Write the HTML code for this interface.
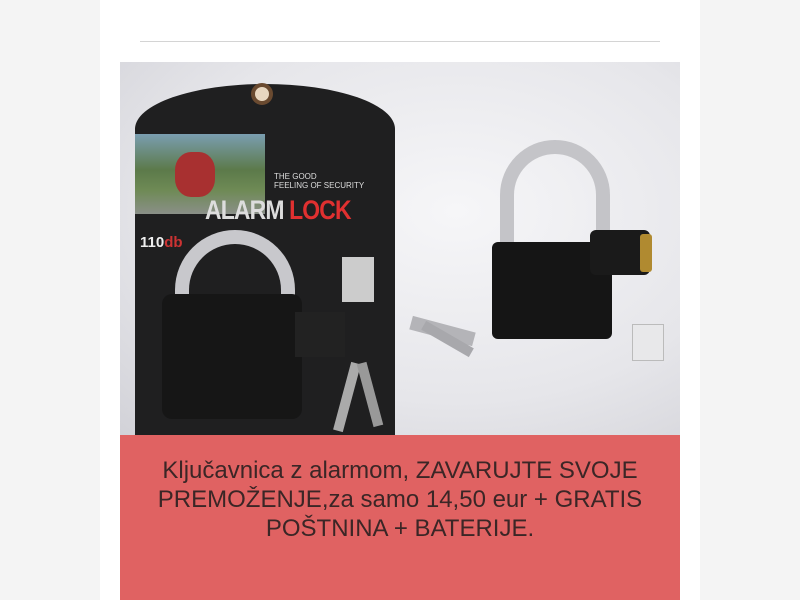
<!DOCTYPE html>
<html><head><meta charset="utf-8"><style>
body{margin:0;background:#f4f4f4;font-family:"Liberation Sans",sans-serif}
.col{position:absolute;left:100px;top:0;width:600px;height:600px;background:#fff}
.hr{position:absolute;left:140px;top:41px;width:520px;height:1px;background:#d4d4d4}
.img{position:absolute;left:120px;top:62px;width:560px;height:373px;overflow:hidden;background:radial-gradient(ellipse at 60% 40%,#f6f6f8 0%,#e6e6ea 60%,#d2d2d8 100%)}
.a{position:absolute}
.red{position:absolute;left:120px;top:435px;width:560px;height:165px;background:#e06262;color:#3b2626;font-size:24px;line-height:29px;text-align:center;padding-top:21px;box-sizing:border-box}
</style></head><body>
<div class="col"></div><div class="hr"></div>
<div class="img">
 <div class="a" style="left:15px;top:22px;width:260px;height:360px;background:#1f1f20;border-radius:130px 130px 0 0/45px 45px 0 0"></div>
 <div class="a" style="left:131px;top:21px;width:22px;height:22px;border-radius:50%;background:#e8d7c0;border:4px solid #6a4a30;box-sizing:border-box"></div>
 <div class="a" style="left:15px;top:72px;width:130px;height:80px;background:linear-gradient(#7a9eb0 0%,#5c7a4a 45%,#6e8a55 70%,#8a8f88 100%)"></div>
 <div class="a" style="left:55px;top:90px;width:40px;height:45px;background:#a83030;border-radius:40%"></div>
 <div class="a" style="left:154px;top:110px;font-size:8px;color:#ddd;line-height:9px">THE GOOD<br>FEELING OF SECURITY</div>
 <div class="a" style="left:85px;top:133px;font-size:27px;font-weight:bold;letter-spacing:-1px;color:#ddd;transform:scaleX(0.85);transform-origin:left">ALARM <span style="color:#e03030">LOCK</span></div>
 <div class="a" style="left:20px;top:172px;font-size:15px;font-weight:bold;color:#eee">110<span style="color:#c33">db</span></div>
 <div class="a" style="left:222px;top:195px;width:32px;height:45px;background:#ccc"></div>
 <div class="a" style="left:55px;top:168px;width:120px;height:120px;border-radius:60px 60px 0 0;border:14px solid #c8c8cc;border-bottom:none;box-sizing:border-box"></div>
 <div class="a" style="left:42px;top:232px;width:140px;height:125px;background:#161616;border-radius:10px"></div>
 <div class="a" style="left:175px;top:250px;width:50px;height:45px;background:#222"></div>
 <div class="a" style="left:380px;top:78px;width:110px;height:120px;border-radius:55px 55px 0 0;border:14px solid #c4c4c8;border-bottom:none;box-sizing:border-box"></div>
 <div class="a" style="left:372px;top:180px;width:120px;height:97px;background:#151515;border-radius:6px"></div>
 <div class="a" style="left:470px;top:168px;width:60px;height:45px;background:#1a1a1a;border-radius:6px"></div>
 <div class="a" style="left:520px;top:172px;width:12px;height:38px;background:#b08a30;border-radius:3px"></div>
 <div class="a" style="left:290px;top:262px;width:65px;height:14px;background:#b4b4b8;transform:rotate(15deg)"></div>
 <div class="a" style="left:300px;top:272px;width:55px;height:10px;background:#a8a8ac;transform:rotate(30deg)"></div>
 <div class="a" style="left:222px;top:300px;width:10px;height:70px;background:#aaa;transform:rotate(15deg)"></div>
 <div class="a" style="left:245px;top:300px;width:10px;height:65px;background:#999;transform:rotate(-15deg)"></div>
 <div class="a" style="left:512px;top:262px;width:30px;height:35px;background:#e8e8ea;border:1px solid #bbb"></div>
</div>
<div class="red">Ključavnica z alarmom, ZAVARUJTE SVOJE<br>PREMOŽENJE,za samo 14,50 eur + GRATIS<br>POŠTNINA + BATERIJE.</div>
</body></html>
